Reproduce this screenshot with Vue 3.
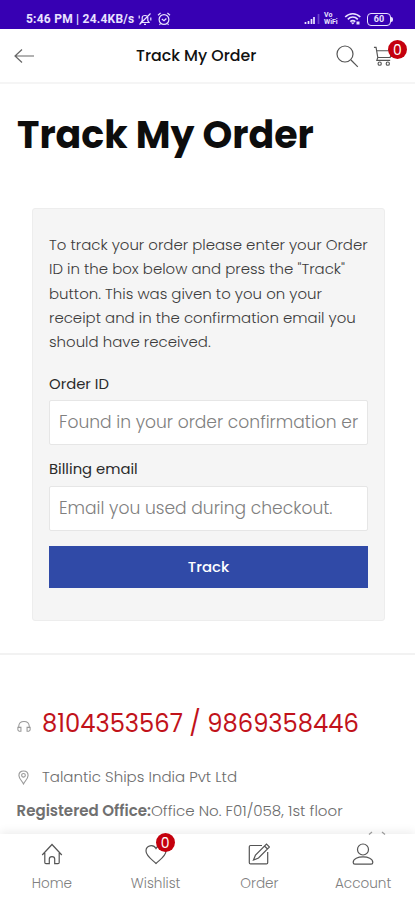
<script setup>
const intro = [
  'To track your order please enter your Order',
  'ID in the box below and press the "Track"',
  'button. This was given to you on your',
  'receipt and in the confirmation email you',
  'should have received.'
]
</script>

<template>
  <div class="screen">
    <header class="status">
      <span class="time">5:46 PM | 24.4KB/s</span>
      <svg class="mute" viewBox="0 0 14 14"><path d="M3 10.5h8L9.8 8.6V5.5C9.6 2.8 4.4 2.8 4.2 5.5v3.1zM6 12.4h2M1.5 12.5l11-11M1.2 3.5v3M12.8 5.5v3" /></svg>
      <svg class="alarm" viewBox="0 0 14 14"><circle cx="7" cy="7.5" r="4.9" /><path d="M1 3.2 3.6 1M10.4 1 13 3.2M4.8 7l2.2 1.8L9.4 6.5M3.5 11.5l-1 1.3M10.5 11.5l1 1.3" /></svg>
      <span class="gap"></span>
      <svg class="signal" viewBox="0 0 16 12"><path d="M1.5 11V9M4.5 11V8M7.5 11V6M10 11V4" /><path class="dim" d="M14.5 11V1" /></svg>
      <span class="vowifi"><span>Vo</span><span>WiFi</span></span>
      <svg class="wifi" viewBox="0 0 18 14"><path d="M1.2 5C5.5.6 12 .6 16.3 5M3.8 7.3c3-2.9 7-2.9 10 0M6.3 9.7c1.5-1.3 3.5-1.3 5 0" /><path class="solid" d="m6.8 10.5 2 2 2-2zM12.5 9.5h3v3h-3z" /></svg>
      <span class="battery">60</span><i class="cap"></i>
    </header>

    <div class="appbar">
      <svg class="back" viewBox="0 0 21 16"><path d="M20 8H1M8 1.5 1 8l7 6.5" /></svg>
      <span class="bar-title">Track My Order</span>
      <svg class="search" viewBox="0 0 24 24"><circle cx="10" cy="10" r="8" /><path d="m16 16 6.8 6.8" /></svg>
      <div class="cart">
        <svg viewBox="0 0 22 22"><path d="M1 1.5h2.2L5 12h13l2-7H3.8M5 12l-1 3h14" /><circle cx="7" cy="18.5" r="1.7" /><circle cx="15.5" cy="18.5" r="1.7" /></svg>
        <b class="badge">0</b>
      </div>
    </div>

    <main>
      <h1>Track My Order</h1>
      <section class="card">
        <p class="intro"><span v-for="line in intro" :key="line">{{ line }}</span></p>
        <label>Order ID</label>
        <div class="field">Found in your order confirmation er</div>
        <label class="second">Billing email</label>
        <div class="field">Email you used during checkout.</div>
        <button>Track</button>
      </section>
      <footer>
        <div class="phone">
          <svg viewBox="0 0 16 14"><path d="M2 8V6.5C2.5-.6 13.5-.6 14 6.5V8M1 8h3.5v4.5H2.4L1 11zM11.5 8H15v3l-1.5 1.5h-2z" /></svg>
          <span>8104353567 / 9869358446</span>
        </div>
        <div class="place">
          <svg viewBox="0 0 12 16"><path d="M6 15C4.2 11.5 1 9 1 5.7 1-.6 11-.6 11 5.7 11 9 7.8 11.5 6 15z" /><circle cx="6" cy="5.6" r="2" /></svg>
          <span>Talantic Ships India Pvt Ltd</span>
        </div>
        <div class="office"><b>Registered Office:</b><span>Office No. F01/058, 1st floor</span></div>
      </footer>
    </main>

    <nav>
      <svg class="totop" viewBox="0 0 18 4"><path d="M1 3.5 4 1M14 1l3 2.5" /></svg>
      <div class="tab">
        <svg viewBox="0 0 22 22"><path d="M1.2 12 11 1.5 20.8 12M3.8 10v9.5c0 .8.4 1.2 1.2 1.2h3.3V16c0-3.2 5.4-3.2 5.4 0v4.7H17c.8 0 1.2-.4 1.2-1.2V10" /></svg>
        <span>Home</span>
      </div>
      <div class="tab">
        <svg viewBox="0 0 22 22"><path d="M11 20.5C7.5 17 1 13 1 8 1 2 8.5 1 11 5.5c2.5-4.5 10-3.5 10 2.5 0 5-6.5 9-10 12.5z" /></svg>
        <b class="badge">0</b>
        <span>Wishlist</span>
      </div>
      <div class="tab">
        <svg viewBox="0 0 22 22"><path d="M14 2.5H2.500c-.8 0-1.2.4-1.2 1.2v16c0 .8.4 1.2 1.2 1.2h16c.8 0 1.2-.4 1.2-1.2V9" /><path d="m7.5 12-2 5 5-2L21.5 4l-3-3zM16.5 3l3 3" /></svg>
        <span>Order</span>
      </div>
      <div class="tab">
        <svg viewBox="0 0 22 22"><circle cx="11" cy="6.5" r="5.5" /><path d="M1.2 19.5c0-7.5 19.6-7.5 19.6 0 0 1-.6 1.7-1.7 1.7H2.9c-1.100 0-1.700-.7-1.700-1.700z" /></svg>
        <span>Account</span>
      </div>
    </nav>
  </div>
</template>

<style>
body { margin: 0; background: #fff; }
</style>

<style scoped>
* { box-sizing: border-box; }
.screen { width: 415px; height: 900px; display: flex; flex-direction: column; overflow: hidden; background: #fff; font-family: Poppins, Inter, sans-serif; color: #111; white-space: nowrap; }
svg { fill: none; stroke: currentColor; stroke-width: 1.2; flex: none; display: block; }
.status { height: 29px; flex: none; background: #3700b3; color: #e9e2ff; display: flex; align-items: center; padding: 9px 22px 0 26px; }
.time { font: 700 12px/16px Roboto, sans-serif; letter-spacing: 0.23px; width: 109px; }
.mute { width: 14px; height: 14px; margin-left: 3px; }
.alarm { width: 14px; height: 14px; margin-left: 5px; }
.gap { flex: 1; }
.signal { width: 16px; height: 12px; stroke-width: 1.7; }
.dim { opacity: 0.3; }
.vowifi { font: 700 7px/7px Roboto, sans-serif; display: flex; flex-direction: column; width: 16px; margin-left: 4px; }
.wifi { width: 18px; height: 14px; margin-left: 4px; stroke-width: 1.6; }
.battery { width: 24px; height: 13px; margin-left: 5px; border: 1.5px solid currentColor; border-radius: 4px; font: 700 9px/11px Roboto, sans-serif; text-align: center; }
.solid { fill: currentColor; stroke: none; }
.cap { width: 2px; height: 5px; background: currentColor; border-radius: 0 2px 2px 0; }

.appbar { height: 55px; flex: none; display: flex; align-items: center; padding-left: 14px; border-bottom: 2px solid #f5f5f5; }
.back { width: 21px; height: 16px; color: #666; }
.bar-title { margin-left: 101px; width: 200px; font-size: 15.8px; font-weight: 500; line-height: 24px; }
.search { width: 24px; height: 24px; margin-left: -1px; color: #555; }
.cart { position: relative; margin-left: 14px; color: #555; }
.cart svg { width: 21px; height: 21px; margin-top: 1px; }
.badge { position: absolute; width: 19px; height: 19px; border-radius: 50%; background: #c4000d; color: #fff; font-size: 14px; font-weight: 400; line-height: 20px; text-align: center; }
.cart .badge { left: 15px; top: -5px; }

main { flex: none; height: 750px; display: flex; flex-direction: column; overflow: hidden; }
h1 { margin: 25px 0 0 17px; height: 52px; font-size: 37.9px; line-height: 52px; font-weight: 700; color: #0d0d0d; }
.card { margin: 47px 30px 0 32px; height: 413px; flex: none; padding: 24px 16px 0; background: #f5f5f5; border: 1px solid #ededed; border-radius: 3px; display: flex; flex-direction: column; }
.intro { margin: 0; font-size: 14.94px; font-weight: 300; line-height: 24.3px; color: #3c3c3c; display: flex; flex-direction: column; align-items: flex-start; }
label { margin-top: 17px; height: 25px; font-size: 14.8px; line-height: 25px; font-weight: 400; color: #2a2a2a; }
label.second { margin-top: 12px; line-height: 24px; }
.field { height: 45px; margin-top: 4px; flex: none; background: #fff; border: 1px solid #e6e6e6; border-radius: 2px; padding-left: 9px; font-size: 17.1px; line-height: 43px; font-weight: 300; color: #808080; overflow: hidden; }
button { margin-top: 15px; height: 42px; flex: none; border: 0; border-radius: 0; background: #304aa7; color: #fff; font: inherit; font-size: 14.9px; font-weight: 500; padding: 0; }
footer { margin-top: 32px; border-top: 2px solid #f2f2f2; padding: 51px 0 0 17px; color: #6c6c6c; font-size: 15px; font-weight: 300; flex: none; }
.phone { height: 36px; display: flex; align-items: center; }
.phone svg { width: 14px; height: 13px; margin-top: 4px; color: #999; }
.phone span { margin-left: 11px; font-size: 24.2px; font-weight: 400; color: #c1121a; line-height: 36px; }
.place { height: 24px; margin-top: 23px; display: flex; align-items: center; line-height: 24px; }
.place svg { width: 11px; height: 15px; margin-left: 1px; color: #999; }
.place span { margin-left: 13px; }
.office { margin: 10px 0 0 -0.5px; line-height: 24px; height: 24px; display: flex; font-size: 15.05px; }
.office b { font-weight: 600; color: #707070; }

nav { position: relative; height: 66px; flex: none; background: #fff; display: flex; box-shadow: 0 -2px 9px rgba(0, 0, 0, 0.08); }
.totop { position: absolute; width: 18px; height: 4px; left: 368px; top: -3px; color: #999; }
.tab { position: relative; width: 104px; display: flex; flex-direction: column; align-items: center; padding-top: 9px; color: #555; }
.tab svg { width: 22px; height: 22px; }
.tab > span { margin-top: 9px; font-size: 13.6px; line-height: 20px; font-weight: 300; color: #808080; }
.tab .badge { left: 52px; top: -1.5px; }
</style>
